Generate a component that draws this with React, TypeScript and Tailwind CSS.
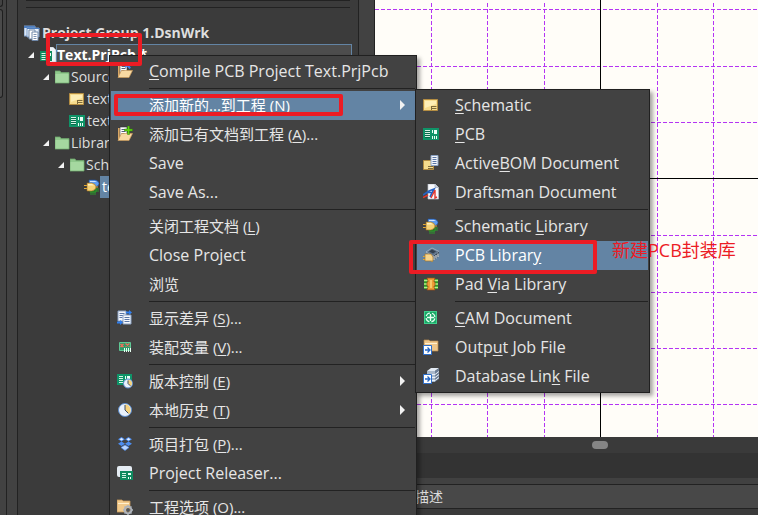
import React from "react";

type IconName =
  | "compile" | "addExisting" | "diff" | "variant" | "version" | "history" | "pack" | "releaser" | "options"
  | "schematic" | "pcb" | "bom" | "draftsman" | "schLib" | "pcbLib" | "padVia" | "cam" | "outJob" | "dbLink"
  | "folder" | "workspace" | "project";

const Sheets = () => (
  <>
    <path d="M1 2h5l1 1v11H1z" fill="#d9a866" />
    <path d="M3 1h7v10H3z" fill="#fff" stroke="#2b2f3a" strokeWidth=".6" />
    <path d="M4.5 3.5h4M4.5 5.500h4M4.500 7.500h3" stroke="#56617a" />
  </>
);
const Flap = () => <path d="M1 14.500 4.500 7.500h11L12 14.500z" fill="#f7d9a2" stroke="#c99a5a" strokeWidth=".7" />;
const Board = () => (
  <>
    <path d="M0 2h16v12H0z" fill="#0f9468" />
    <path d="M2 4h5v8H2z" fill="#0a6b4c" />
    <path d="M2 4.500h5M2 6.500h5M2 8.500h5M2 10.500h5" stroke="#d6f3e6" />
    <path d="M9 4h1v3H9zM11 4h3v4h-3zM9 10h1v3H9zM11 10h1v3h-1zM13 10h1v3h-1z" fill="#e9fff6" />
  </>
);
const Gate = () => (
  <>
    <path d="M5 1h6q4 1 4 3.500T11 8H5z" fill="#5f9df0" stroke="#1d4fa0" strokeWidth=".6" />
    <path d="M6 2h5l2 1H6z" fill="#cfe3ff" />
    <path d="M6 9h6v4H6zM7 13v3M9 13v3M11 13v3M12 10h3M12 12h3" stroke="#2d9a2d" fill="#1f6f22" />
    <path d="M0 6.500h3M0 9.500h3M11 8h3" stroke="#e2a934" />
    <path d="M3 4h5q4 1 4 4t-4 4H3z" fill="#f6d276" stroke="#9a6a1c" strokeWidth=".6" />
    <path d="M4 5h4l2 1.500H4z" fill="#fff0bd" />
  </>
);
const Clock = ({ cx, cy, r }: { cx: number; cy: number; r: number }) => (
  <>
    <circle cx={cx} cy={cy} r={r} fill="#e9f1fb" stroke="#5a8acb" />
    <path d={`M${cx} ${cy}V${cy - r + 1}A${r - 1} ${r - 1} 0 0 1 ${cx + r * 0.6} ${cy + r * 0.6}z`} fill="#f6d27c" />
    <path d={`M${cx} ${cy - r + 1.5}V${cy}l${r * 0.5} ${r * 0.5}`} stroke="#3b4a66" fill="none" />
  </>
);
const LinkBadge = () => (
  <>
    <path d="M.5 6.500h8v9h-8z" fill="#fff" stroke="#2d6fcb" />
    <path d="M2 11h5M4.500 8.500 7 11l-2.500 2.500" stroke="#2466c4" strokeWidth="1.300" fill="none" />
  </>
);

const art: Record<IconName, React.ReactNode> = {
  compile: <><Sheets /><path d="M8 0v5l2-1.500L12.500 6 14 4.500l-2-2L14.500 1z" fill="#3f7be6" /><Flap /></>,
  addExisting: <><Sheets /><Flap /><path d="M10.500 0h2v3h3v2h-3v3.500h-2V5h-3V3h3z" fill="#5fd510" stroke="#2f7d0a" strokeWidth=".5" /></>,
  diff: (
    <>
      <path d="M1 1h8v10H1z" fill="#f4f7fc" stroke="#8ba2c4" />
      <path d="M2.500 3.500h5M2.500 5.500h5M2.500 7.500h3" stroke="#5b77a6" />
      <path d="M6 5h8v9H6z" fill="#f4f7fc" stroke="#8ba2c4" />
      <path d="M7.500 7.500h5M7.500 9.500h5M7.500 11.500h5" stroke="#5b77a6" />
      <path d="M9 1.500h3V0l3 2.500L12 5V3.500H9zM0 11.500h3V10l3 2.500L3 15v-1.500H0z" fill="#2f7ff0" />
    </>
  ),
  variant: (
    <>
      <path d="M2.500 3.500h11v8h-11z" fill="#2f9a69" stroke="#5fc794" />
      <path d="M3.500 5l3 3M6.500 5l-3 3M8.500 4.500l4 3M12.500 4.500l-4 3" stroke="#f0705c" strokeWidth="1.500" />
      <path d="M7.500 9v4M9.500 9v4M11.500 9v4M13.500 9v4" stroke="#e8fff3" />
    </>
  ),
  version: <><path d="M0 1h15v11H0z" fill="#0f9468" /><path d="M2 3.500h4M2 5.500h4M2 7.500h4M2 9.500h4" stroke="#d6f3e6" /><path d="M8 3h1v3H8zM10 3h3v3h-3z" fill="#e9fff6" /><Clock cx={11} cy={10.5} r={4.5} /></>,
  history: <Clock cx={8} cy={8} r={6.5} />,
  pack: (
    <>
      <path d="M4.500 1 8 3.200 4.500 5.500 1 3.200zM11.500 1 15 3.200 11.500 5.500 8 3.200zM4.500 5.500 8 7.800 4.500 10 1 7.800zM11.500 5.500 15 7.800 11.500 10 8 7.800z" fill="#4c8df0" />
      <path d="m4.500 2 2 1.200-2 1.300-2-1.300zM11.500 2l2 1.200-2 1.300-2-1.300z" fill="#e5efff" />
      <path d="M4 11.500 8 9l4 2.500L8 14.500z" fill="#b8d4ff" stroke="#4c8df0" strokeWidth=".7" />
    </>
  ),
  releaser: <><rect y="1" width="15" height="11" rx="2" fill="#e5ecf3" /><path d="M3 6h13v9H3z" fill="#0f8a5f" /><path d="M5 8.500h4M5 10.500h4M5 12.500h4" stroke="#d6f3e6" /><path d="M11 8h3v2h-3zM11 12h1v2h-1zM13 12h1v2h-1z" fill="#e9fff6" /></>,
  options: (
    <>
      <path d="M0 1h5l1 1h7v11H0z" fill="#f1ca8c" stroke="#c89b5b" strokeWidth=".8" />
      <path d="M1 4.500h11" stroke="#fff0cf" />
      <circle cx="11" cy="11" r="3.400" fill="none" stroke="#aeb4bc" strokeWidth="2" />
      <path d="M11 6v2M11 14v2M6 11h2M14 11h2M7.500 7.500l1.300 1.300M13.200 13.200l1.300 1.300M14.500 7.500l-1.300 1.300M7.500 14.500l1.300-1.300" stroke="#aeb4bc" strokeWidth="1.400" />
      <circle cx="11" cy="11" r="2" fill="#50555c" />
    </>
  ),
  schematic: <><path d="M.5 2.500h14v11H.5z" fill="#f6dc8e" stroke="#b48d42" /><path d="M2 4h11v3L2 11z" fill="#fdeeb6" /><path d="M8 9.500h5.500M8 11.500h5.500M8.500 9v4" stroke="#7d6a3c" /></>,
  pcb: <Board />,
  bom: <><path d="M.5 5.500h10v9H.5z" fill="#f6dc8e" stroke="#b48d42" /><path d="M5 11.500h5M5 13.500h5" stroke="#7d6a3c" /><path d="M8 .5h7v10H8z" fill="#f4f7fc" stroke="#8ba2c4" /><path d="M9.500 2.500h4M9.500 4.500h4M9.500 6.500h4M9.500 8.500h4" stroke="#5b77a6" /></>,
  draftsman: (
    <>
      <path d="M5 0h7l3.500 3.500V15H5z" fill="#f8f9fc" stroke="#b9c0cc" strokeWidth=".7" />
      <path d="M12 0v3.500h3.500" fill="#cfd6e2" stroke="#9aa6b8" strokeWidth=".6" />
      <path d="M0 11 6 7l5-2-4 8M5 8.500h5" stroke="#2462c4" strokeWidth="1.700" fill="none" />
      <path d="M0 13.500 5 11M8 14l4-8v8l2-1" stroke="#e2372f" strokeWidth="1.400" fill="none" />
    </>
  ),
  schLib: <Gate />,
  pcbLib: (
    <>
      <path d="M3 5 9 1l7 3.500-6 4.500z" fill="#5e7288" stroke="#c5ced6" strokeWidth=".6" />
      <path d="M6 4.500 9 2.500l4 2-3 2z" fill="#34414f" />
      <path d="m10 9 6-4.500V9l-5 4z" fill="#3b4a5a" />
      <path d="M11 9v4M13 8v3.500M15 6.500V10" stroke="#f2f5f7" />
      <path d="M0 9.500h3M0 12.500h3M8 14h2" stroke="#e2a934" />
      <path d="M2 7h6l2 3v4H2z" fill="#f6d58c" stroke="#a8752a" strokeWidth=".7" />
    </>
  ),
  padVia: (
    <>
      <path d="M1 3h14v10H1z" fill="#2c9a24" />
      <path d="M1 4.500h14M1 8h14M1 11.500h14" stroke="#b6ee86" strokeWidth="1.500" />
      <path d="M4 2h8l-1 3v1h1v4h-1v1l1 3H4l1-3v-1H4V6h1V5z" fill="#ee9c36" stroke="#9a4c14" strokeWidth=".7" />
      <path d="M7 4h2v8H7z" fill="#f8c668" />
    </>
  ),
  cam: (
    <>
      <rect x="1.500" y="1.500" width="12" height="12" fill="#19a866" stroke="#3fd08d" />
      <circle cx="7.500" cy="7.500" r="4.500" fill="none" stroke="#e8fff3" strokeWidth="1.200" strokeDasharray="5 2.070" strokeDashoffset="-1" />
      <path d="M7.500 4v7M4 7.500h7" stroke="#e8fff3" strokeWidth="1.400" />
    </>
  ),
  outJob: <><path d="M1 1h5l1 1h8v10H1z" fill="#efc68a" stroke="#b98a4e" strokeWidth=".7" /><path d="M2 4.500h12" stroke="#fff0d0" /><LinkBadge /></>,
  dbLink: (
    <>
      <path d="M4 3 8 0h8l-4 3z" fill="#e3ebf4" />
      <path d="M4 3h8v11H4z" fill="#aab9cb" />
      <path d="m12 3 4-3v11l-4 3z" fill="#6d7f96" />
      <path d="M4 6.500h8l4-3M4 9.500h8l4-3M4 12.500h8l4-3" stroke="#e9f0f8" fill="none" />
      <LinkBadge />
    </>
  ),
  folder: <><path d="M0 3V2h5l1 1.500h8V14H0z" fill="#8fc88c" stroke="#6da56b" strokeWidth=".8" /><path d="M.5 5h13v8.500H.5z" fill="#a5d8a0" /></>,
  workspace: (
    <>
      <path d="M0 1h11v10H0z" fill="#dbe7f6" stroke="#7d9cc8" /><path d="M0 2h11" stroke="#4d7ec0" strokeWidth="2" />
      <path d="M3 3h12v9H3z" fill="#eaf2fb" stroke="#7d9cc8" /><path d="M3 3.500h12.500" stroke="#4d7ec0" />
      <path d="M5 5h6v9H5z" fill="#fff" stroke="#6f87a8" /><path d="M8 7h6v8.500H8z" fill="#fff" stroke="#6f87a8" />
      <path d="M9.500 9.500h3M9.500 11.500h3M9.500 13.500h3" stroke="#7d93b3" />
    </>
  ),
  project: <><path d="M8 0h5l3 3v12H8z" fill="#f1f4f8" stroke="#a9b3c0" strokeWidth=".6" /><path d="M0 4h12v10H0z" fill="#0f8a5f" /><path d="M1.500 6.500h4M1.500 8.500h4M1.500 10.500h4M1.500 12.500h4" stroke="#d6f3e6" /><path d="M7 6h1v3H7zM9 6h2v3H9zM7 11h1v2H7zM9 11h1v2H9z" fill="#e9fff6" /></>,
};

function Icon({ name }: { name: IconName }) {
  return <svg viewBox="0 0 16 16" className="size-4 shrink-0" fill="none" aria-hidden="true">{art[name]}</svg>;
}

type Item = { label: string; icon?: IconName; sub?: boolean; active?: boolean };

const projectMenu: Item[][] = [
  [{ label: "&Compile PCB Project Text.PrjPcb", icon: "compile" }],
  [
    { label: "添加新的...到工程 (&N)", sub: true, active: true },
    { label: "添加已有文档到工程 (&A)...", icon: "addExisting" },
    { label: "Save" },
    { label: "Save As..." },
  ],
  [{ label: "关闭工程文档 (&L)" }, { label: "Close Project" }, { label: "浏览" }],
  [{ label: "显示差异 (&S)...", icon: "diff" }, { label: "装配变量 (&V)...", icon: "variant" }],
  [{ label: "版本控制 (&E)", icon: "version", sub: true }, { label: "本地历史 (&T)", icon: "history", sub: true }],
  [{ label: "项目打包 (&P)...", icon: "pack" }, { label: "Project Releaser...", icon: "releaser" }],
  [{ label: "工程选项 (&O)...", icon: "options" }],
];

const addNewMenu: Item[][] = [
  [
    { label: "&Schematic", icon: "schematic" },
    { label: "&PCB", icon: "pcb" },
    { label: "Active&BOM Document", icon: "bom" },
    { label: "Draftsman Document", icon: "draftsman" },
  ],
  [
    { label: "Schematic &Library", icon: "schLib" },
    { label: "PCB Librar&y", icon: "pcbLib", active: true },
    { label: "Pad &Via Library", icon: "padVia" },
  ],
  [
    { label: "&CAM Document", icon: "cam" },
    { label: "Outp&ut Job File", icon: "outJob" },
    { label: "Database Lin&k File", icon: "dbLink" },
  ],
];

const hasHan = (text: string) => /[\u4e00-\u9fff]/.test(text);

function Label({ text }: { text: string }) {
  const at = text.indexOf("&");
  const size = hasHan(text) ? "text-[15px] leading-5" : "text-base leading-5";
  if (at < 0) return <span className={size}>{text}</span>;
  return (
    <span className={size}>
      {text.slice(0, at)}
      <span className="underline underline-offset-2">{text[at + 1]}</span>
      {text.slice(at + 2)}
    </span>
  );
}

function Menu({ groups, className }: { groups: Item[][]; className: string }) {
  return (
    <div role="menu" className={`absolute border border-[#202020] bg-[#424242] p-px text-[#e6e6e6] shadow-[3px_3px_4px_rgba(0,0,0,0.35)] ${className}`}>
      {groups.map((group, g) => (
        <React.Fragment key={g}>
          {g > 0 && <div role="separator" className="flex h-[5px] items-center pl-[38px]"><div className="h-px w-full bg-[#222]" /></div>}
          {group.map((item) => (
            <button
              key={item.label}
              role="menuitem"
              className={`flex h-[29px] w-full items-center pr-2.5 pb-0.5 pl-1.5 text-left whitespace-nowrap ${item.active ? "bg-[#6384a4] text-white" : ""}`}
            >
              <span className="mr-4 size-4 shrink-0">{item.icon && <Icon name={item.icon} />}</span>
              <Label text={item.label} />
              {item.sub && <svg viewBox="0 0 5 10" className="ml-auto h-2.5 w-[5px]" aria-hidden="true"><path d="M0 0 5 5 0 10z" fill="#f2f2f2" /></svg>}
            </button>
          ))}
        </React.Fragment>
      ))}
    </div>
  );
}

function Caret() {
  return <svg viewBox="0 0 6 6" className="mr-1.5 size-1.5 shrink-0" aria-hidden="true"><path d="M6 0v6H0z" fill="#f2f2f2" /></svg>;
}

function TreeRow({ indent, icon, label, active }: { indent: string; icon: IconName; label: string; active?: boolean }) {
  const isFolder = icon === "folder";
  return (
    <li className={`flex h-[22px] items-center whitespace-nowrap ${indent}`}>
      {isFolder && <Caret />}
      <Icon name={icon} />
      <span className={`flex h-[22px] items-center ${isFolder ? "" : "pl-0.5"} ${active ? "w-12 bg-[#6384a4] text-white" : ""}`}>{label}</span>
    </li>
  );
}

function ProjectsPanel() {
  return (
    <aside className="w-[341px] shrink-0 border-r border-[#222] bg-[#3b3b3b] px-1.5 text-sm leading-5 text-[#dedede]">
      <div className="mx-0.5 h-px border-b border-[#222]" />
      <div className="mx-0.5 mb-3.5 h-[7px] border-b border-[#222]" />
      <ul>
        <li className="flex h-[22px] items-center gap-0.5 font-bold"><Icon name="workspace" /><span>Project Group 1.DsnWrk</span></li>
        <li className="flex h-[22px] items-center pl-1 font-bold text-white">
          <Caret />
          <Icon name="project" />
          <span className="flex h-[22px] flex-1 items-center border border-[#6384a4] bg-[#4d4d4d]">Text.PrjPcb *</span>
        </li>
        <TreeRow indent="pl-[19px]" icon="folder" label="Source Documents" />
        <TreeRow indent="pl-[45px]" icon="schematic" label="text.SchDoc" />
        <TreeRow indent="pl-[45px]" icon="pcb" label="text.PcbDoc" />
        <TreeRow indent="pl-[19px]" icon="folder" label="Libraries" />
        <TreeRow indent="pl-[34px]" icon="folder" label="Schematic Library Documents" />
        <TreeRow indent="pl-[60px]" icon="schLib" label="text.SchLib" active />
      </ul>
    </aside>
  );
}

const columns = [56, 112, 169, 282, 338];
const rows = [9, 66, 122, 235, 292, 348, 404];

function SheetCanvas() {
  return (
    <div className="min-h-0 flex-1 overflow-hidden bg-[#fffdf8]">
      <svg className="size-full" shapeRendering="crispEdges" aria-hidden="true">
        <g stroke="#b434f4" strokeDasharray="4 2">
          {columns.map((x) => <line key={x} x1={x + 0.5} x2={x + 0.5} y1="3" y2="100%" />)}
          {rows.map((y) => <line key={y} y1={y + 0.5} y2={y + 0.5} x1="0" x2="100%" />)}
        </g>
        <g stroke="#000">
          <line x1="225.5" x2="225.5" y1="0" y2="100%" />
          <line x1="0" x2="100%" y1="178.5" y2="178.5" />
        </g>
      </svg>
    </div>
  );
}

export default function App() {
  return (
    <div className="relative flex h-screen overflow-hidden bg-[#424242] font-['Open_Sans','Noto_Sans_CJK_SC',sans-serif]">
      <div className="w-[7px] shrink-0 border-r border-[#222]">
        <div className="h-[7px] w-[3px] rounded-br border-r border-b border-[#1f1f1f]" />
        <div className="mt-0.5 h-[89px] w-[3px] rounded-r border-y border-r border-[#1f1f1f] bg-[#4a4a4a]" />
      </div>
      <div className="w-[11px] shrink-0 border-r border-[#222]" />
      <ProjectsPanel />
      <main className="flex min-w-0 flex-1 flex-col">
        <div className="ml-[15px] flex min-h-0 flex-1 border-l border-[#222]"><SheetCanvas /></div>
        <div className="flex h-4 items-center justify-center bg-[#3a3a3a] pl-[83px]"><div className="h-2 w-4 rounded-full bg-[#858585]" /></div>
        <div className="h-[25px] bg-[#333]" />
        <div className="h-1.5 bg-[#414141]" />
        <table className="w-full border-y border-[#222] bg-[#484848] text-sm leading-[22px] text-[#dcdcdc]">
          <thead><tr><th className="h-6 p-0 pl-14 text-left font-normal">描述</th></tr></thead>
        </table>
        <div className="h-1.5 bg-[#3a3a3a]" />
      </main>

      <Menu groups={projectMenu} className="top-[55px] left-[109px] w-[308px]" />
      <Menu groups={addNewMenu} className="top-[89px] left-[415px] w-[235px]" />

      <div className="absolute top-[33px] left-[46px] h-[33px] w-24 rounded-xs border-4 border-[#ec1c24]" />
      <div className="absolute top-[94px] left-[114px] h-[22px] w-[229px] rounded-xs border-4 border-[#ec1c24]" />
      <div className="absolute top-[240px] left-[409px] h-[34px] w-[188px] rounded-xs border-4 border-[#ec1c24]" />
      <p className="absolute top-[238px] left-[612px] text-lg leading-6 whitespace-nowrap text-[#ec1c24]">新建PCB封装库</p>
    </div>
  );
}
